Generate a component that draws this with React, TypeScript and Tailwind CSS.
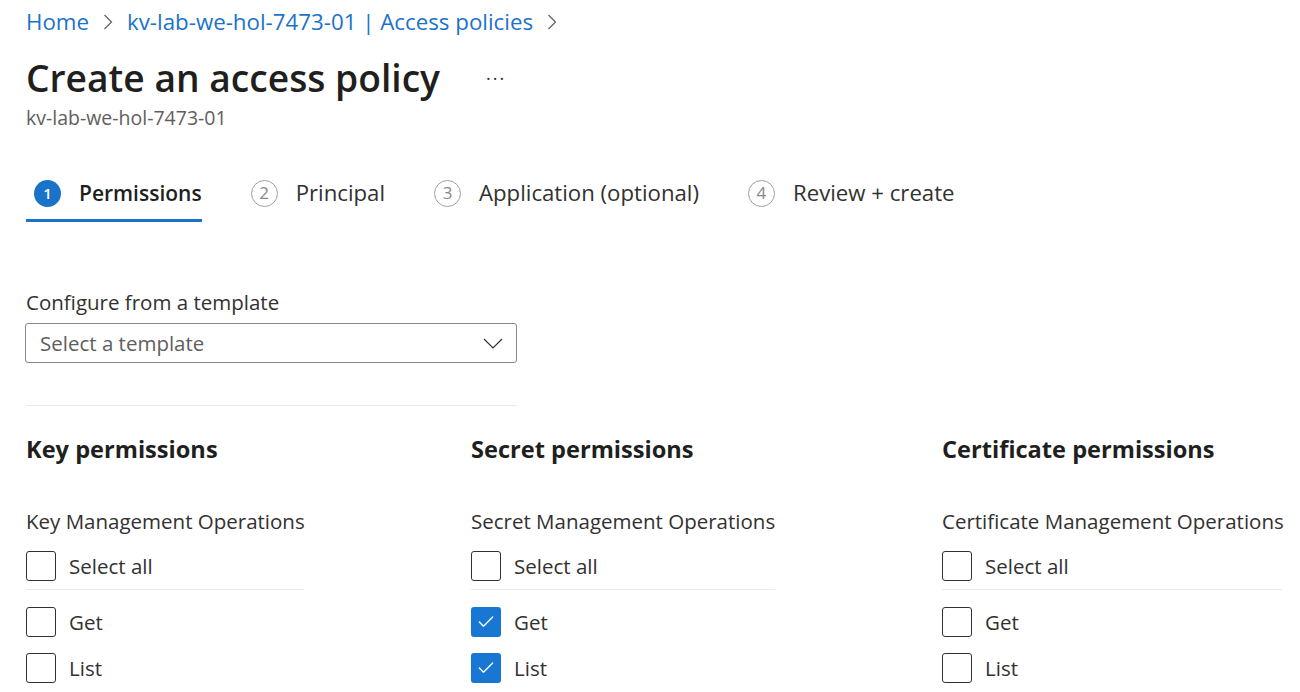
import { Check } from 'lucide-react';

const tabs = [
    { n: 1, label: 'Permissions', active: true },
    { n: 2, label: 'Principal', active: false },
    { n: 3, label: 'Application (optional)', active: false },
    { n: 4, label: 'Review + create', active: false },
];

const columns = [
    { title: 'Key permissions', group: 'Key Management Operations', width: 'w-[445px]', line: 'w-[278px]', checked: false },
    { title: 'Secret permissions', group: 'Secret Management Operations', width: 'w-[471px]', line: 'w-[304px]', checked: true },
    { title: 'Certificate permissions', group: 'Certificate Management Operations', width: 'w-[358px]', line: 'w-[340px]', checked: false },
];

function Crumb() {
    return (
        <svg width="10" height="16" viewBox="0 0 10 16" className="mx-[14px] shrink-0">
            <polyline points="1.5,1 8.5,8 1.5,15" fill="none" stroke="#605e5c" strokeWidth="1.2" />
        </svg>
    );
}

function Box({ checked }: { checked: boolean }) {
    if (checked) {
        return (
            <div className="w-[30px] h-[30px] rounded-[3px] bg-[#1877d3] flex items-center justify-center shrink-0">
                <Check className="w-[20px] h-[20px] text-white" strokeWidth={1.6} />
            </div>
        );
    }
    return <div className="w-[30px] h-[30px] rounded-[3px] border border-[#323130] shrink-0" />;
}

function Row({ label, checked }: { label: string; checked: boolean }) {
    return (
        <div className="flex items-center gap-[13px] h-[30px]">
            <Box checked={checked} />
            <span className="text-[20.5px] leading-[28px] text-[#323130] -mt-px">{label}</span>
        </div>
    );
}

export default function App() {
    return (
        <div
            className="w-[1300px] h-[692px] overflow-hidden bg-white pl-[26px] text-[#323130]"
            style={{ fontFamily: '"Segoe UI", "Open Sans", sans-serif' }}
        >
            {/* Breadcrumb */}
            <div className="pt-[8px] flex items-center text-[22.3px] leading-[28px] text-[#1b73c9]">
                <span>Home</span>
                <Crumb />
                <span>kv-lab-we-hol-7473-01 | Access policies</span>
                <Crumb />
            </div>

            {/* Title */}
            <div className="mt-[18px] flex items-center">
                <h1 className="text-[37.2px] leading-[48px] font-semibold text-[#201f1e]">Create an access policy</h1>
                <span className="ml-[46px] text-[18px] leading-[24px] tracking-[2px] text-[#323130]">···</span>
            </div>
            <div className="mt-[4px] text-[19.5px] leading-[24px] text-[#605e5c]">kv-lab-we-hol-7473-01</div>

            {/* Tabs */}
            <div className="mt-[49px] flex gap-[41px]">
                {tabs.map((t) => (
                    <div
                        key={t.n}
                        className={
                            'flex items-center pl-[8px] pb-[12px] border-b-[3px] ' +
                            (t.active ? 'border-[#1b73c9]' : 'border-transparent')
                        }
                    >
                        <div
                            className={
                                'w-[27px] h-[27px] rounded-full flex items-center justify-center ' +
                                (t.active
                                    ? 'bg-[#1b73c9] text-white font-semibold text-[15px]'
                                    : 'border border-[#a19f9d] text-[#8a8886] text-[17px]')
                            }
                        >
                            {t.n}
                        </div>
                        <span
                            className={
                                'ml-[18px] leading-[28px] ' +
                                (t.active ? 'text-[21px] font-semibold text-[#201f1e]' : 'text-[22.2px] text-[#323130]')
                            }
                        >
                            {t.label}
                        </span>
                    </div>
                ))}
            </div>

            {/* Template */}
            <div className="mt-[66px] text-[20.5px] leading-[28px]">Configure from a template</div>
            <div className="mt-[7px] w-[492px] h-[40px] -ml-px border border-[#8a8886] rounded-[3px] flex items-center justify-between pl-[14px] pr-[13px]">
                <span className="text-[20.5px] leading-[28px] text-[#605e5c]">Select a template</span>
                <svg width="20" height="11" viewBox="0 0 20 11">
                    <polyline points="1,1 10,10 19,1" fill="none" stroke="#323130" strokeWidth="1.2" />
                </svg>
            </div>
            <div className="mt-[42px] w-[491px] h-px bg-[#edebe9]" />

            {/* Permission columns */}
            <div className="mt-[27px] flex">
                {columns.map((c) => (
                    <div key={c.title} className={c.width + ' shrink-0'}>
                        <h2 className="text-[23.6px] leading-[32px] font-bold text-[#201f1e]">{c.title}</h2>
                        <div className="mt-[42px] text-[20.5px] leading-[28px] whitespace-nowrap">{c.group}</div>
                        <div className="mt-[16px]">
                            <Row label="Select all" checked={false} />
                        </div>
                        <div className={'mt-[8px] h-px bg-[#edebe9] ' + c.line} />
                        <div className="mt-[17px]">
                            <Row label="Get" checked={c.checked} />
                        </div>
                        <div className="mt-[16px]">
                            <Row label="List" checked={c.checked} />
                        </div>
                    </div>
                ))}
            </div>
        </div>
    );
}
